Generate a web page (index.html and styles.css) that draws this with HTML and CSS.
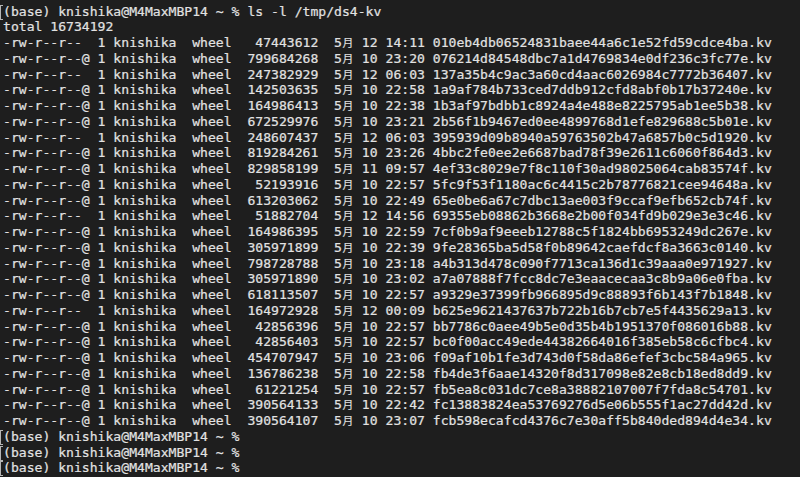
FILE: index.html
```html
<!DOCTYPE html>
<html lang="ja">
<head>
<meta charset="utf-8">
<title>ls -l /tmp/ds4-kv</title>
<link rel="stylesheet" href="styles.css">
</head>
<body>
<main class="term">
<div class="line mark">(base) knishika@M4MaxMBP14 ~ % ls -l /tmp/ds4-kv</div>
<div class="line">total 16734192</div>
<div class="line">-rw-r--r--  1 knishika  wheel   47443612  5<span class="wide">月</span> 12 14:11 010eb4db06524831baee44a6c1e52fd59cdce4ba.kv</div>
<div class="line">-rw-r--r--@ 1 knishika  wheel  799684268  5<span class="wide">月</span> 10 23:20 076214d84548dbc7a1d4769834e0df236c3fc77e.kv</div>
<div class="line">-rw-r--r--  1 knishika  wheel  247382929  5<span class="wide">月</span> 12 06:03 137a35b4c9ac3a60cd4aac6026984c7772b36407.kv</div>
<div class="line">-rw-r--r--@ 1 knishika  wheel  142503635  5<span class="wide">月</span> 10 22:58 1a9af784b733ced7ddb912cfd8abf0b17b37240e.kv</div>
<div class="line">-rw-r--r--@ 1 knishika  wheel  164986413  5<span class="wide">月</span> 10 22:38 1b3af97bdbb1c8924a4e488e8225795ab1ee5b38.kv</div>
<div class="line">-rw-r--r--@ 1 knishika  wheel  672529976  5<span class="wide">月</span> 10 23:21 2b56f1b9467ed0ee4899768d1efe829688c5b01e.kv</div>
<div class="line">-rw-r--r--  1 knishika  wheel  248607437  5<span class="wide">月</span> 12 06:03 395939d09b8940a59763502b47a6857b0c5d1920.kv</div>
<div class="line">-rw-r--r--@ 1 knishika  wheel  819284261  5<span class="wide">月</span> 10 23:26 4bbc2fe0ee2e6687bad78f39e2611c6060f864d3.kv</div>
<div class="line">-rw-r--r--@ 1 knishika  wheel  829858199  5<span class="wide">月</span> 11 09:57 4ef33c8029e7f8c110f30ad98025064cab83574f.kv</div>
<div class="line">-rw-r--r--@ 1 knishika  wheel   52193916  5<span class="wide">月</span> 10 22:57 5fc9f53f1180ac6c4415c2b78776821cee94648a.kv</div>
<div class="line">-rw-r--r--@ 1 knishika  wheel  613203062  5<span class="wide">月</span> 10 22:49 65e0be6a67c7dbc13ae003f9ccaf9efb652cb74f.kv</div>
<div class="line">-rw-r--r--  1 knishika  wheel   51882704  5<span class="wide">月</span> 12 14:56 69355eb08862b3668e2b00f034fd9b029e3e3c46.kv</div>
<div class="line">-rw-r--r--@ 1 knishika  wheel  164986395  5<span class="wide">月</span> 10 22:59 7cf0b9af9eeeb12788c5f1824bb6953249dc267e.kv</div>
<div class="line">-rw-r--r--@ 1 knishika  wheel  305971899  5<span class="wide">月</span> 10 22:39 9fe28365ba5d58f0b89642caefdcf8a3663c0140.kv</div>
<div class="line">-rw-r--r--@ 1 knishika  wheel  798728788  5<span class="wide">月</span> 10 23:18 a4b313d478c090f7713ca136d1c39aaa0e971927.kv</div>
<div class="line">-rw-r--r--@ 1 knishika  wheel  305971890  5<span class="wide">月</span> 10 23:02 a7a07888f7fcc8dc7e3eaacecaa3c8b9a06e0fba.kv</div>
<div class="line">-rw-r--r--@ 1 knishika  wheel  618113507  5<span class="wide">月</span> 10 22:57 a9329e37399fb966895d9c88893f6b143f7b1848.kv</div>
<div class="line">-rw-r--r--  1 knishika  wheel  164972928  5<span class="wide">月</span> 12 00:09 b625e9621437637b722b16b7cb7e5f4435629a13.kv</div>
<div class="line">-rw-r--r--@ 1 knishika  wheel   42856396  5<span class="wide">月</span> 10 22:57 bb7786c0aee49b5e0d35b4b1951370f086016b88.kv</div>
<div class="line">-rw-r--r--@ 1 knishika  wheel   42856403  5<span class="wide">月</span> 10 22:57 bc0f00acc49ede44382664016f385eb58c6cfbc4.kv</div>
<div class="line">-rw-r--r--@ 1 knishika  wheel  454707947  5<span class="wide">月</span> 10 23:06 f09af10b1fe3d743d0f58da86efef3cbc584a965.kv</div>
<div class="line">-rw-r--r--@ 1 knishika  wheel  136786238  5<span class="wide">月</span> 10 22:58 fb4de3f6aae14320f8d317098e82e8cb18ed8dd9.kv</div>
<div class="line">-rw-r--r--@ 1 knishika  wheel   61221254  5<span class="wide">月</span> 10 22:57 fb5ea8c031dc7ce8a38882107007f7fda8c54701.kv</div>
<div class="line">-rw-r--r--@ 1 knishika  wheel  390564133  5<span class="wide">月</span> 10 22:42 fc13883824ea53769276d5e06b555f1ac27dd42d.kv</div>
<div class="line">-rw-r--r--@ 1 knishika  wheel  390564107  5<span class="wide">月</span> 10 23:07 fcb598ecafcd4376c7e30aff5b840ded894d4e34.kv</div>
<div class="line mark">(base) knishika@M4MaxMBP14 ~ %</div>
<div class="line mark">(base) knishika@M4MaxMBP14 ~ %</div>
<div class="line mark">(base) knishika@M4MaxMBP14 ~ %</div>
</main>
</body>
</html>
```
FILE: styles.css
```css
html, body {
  margin: 0;
  padding: 0;
  background: #1e1e1e;
  height: 100%;
  overflow: hidden;
}

.term {
  padding: 3.5px 0 0 3px;
  font-family: "DejaVu Sans Mono", "Noto Sans CJK JP", monospace;
  font-size: 13.1px;
  color: #e2e2e2;
  -webkit-text-stroke: 0.2px #e2e2e2;
}

.line {
  position: relative;
  height: 15.75px;
  line-height: 15.75px;
  white-space: pre;
}

.wide {
  display: inline-block;
  width: 2ch;
  text-align: center;
  font-family: "Noto Sans CJK JP", sans-serif;
  font-size: 10.8px;
  line-height: 15.75px;
  vertical-align: top;
  -webkit-text-stroke: 0.15px #e2e2e2;
}

.mark::before {
  content: "";
  position: absolute;
  left: -3px;
  top: 1px;
  width: 2px;
  height: 13px;
  border: 1px solid #b5b5b5;
  border-right: none;
}
```
